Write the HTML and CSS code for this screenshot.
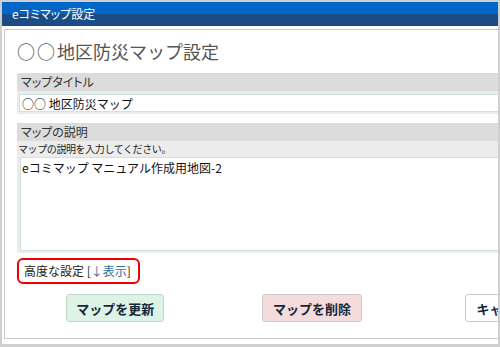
FILE: index.html
```html
<!DOCTYPE html>
<html lang="ja">
<head>
<meta charset="utf-8">
<title>eコミマップ設定</title>
<link rel="stylesheet" href="styles.css">
</head>
<body>
<div class="window">
  <div class="titlebar">eコミマップ設定</div>
  <div class="panel">
    <h1 class="page-title"><span class="circles">○○</span>地区防災マップ設定</h1>
    <div class="section">
      <div class="sec-head">マップタイトル</div>
      <div class="sec-body sec-body-input">
        <input class="text-input" type="text" value="○○ 地区防災マップ">
      </div>
    </div>
    <div class="section section-desc">
      <div class="sec-head">マップの説明</div>
      <div class="sec-body">
        <div class="hint">マップの説明を入力してください。</div>
        <textarea class="text-area">eコミマップ マニュアル作成用地図-2</textarea>
      </div>
    </div>
    <div class="advanced"><span class="advanced-box">高度な設定 [<a class="toggle" href="#">↓表示</a>]</span></div>
    <div class="buttons">
      <button class="btn btn-update" type="button">マップを更新</button>
      <button class="btn btn-delete" type="button">マップを削除</button>
      <button class="btn btn-cancel" type="button">キャンセル</button>
    </div>
  </div>
</div>
</body>
</html>
```

FILE: styles.css
```css
html, body {
  margin: 0;
  padding: 0;
}
body {
  background: #cfcfcf;
  width: 500px;
  height: 347px;
  overflow: hidden;
  font-family: "Noto Sans CJK JP", "Noto Sans", sans-serif;
}
.window {
  margin: 2px 2px 0 2px;
  width: 496px;
  height: 342px;
  background: #fff;
  overflow: hidden;
}
.titlebar {
  height: 24px;
  line-height: 24px;
  padding-left: 10px;
  color: #fff;
  font-size: 12px;
  font-feature-settings: "palt";
  background: linear-gradient(to bottom, #0166c8 0, #0166c8 12px, #1b4c86 12px, #1b4c86 24px);
  white-space: nowrap;
}
.panel {
  margin: 3px 0 0 2px;
  width: 560px;
  height: 310px;
  border: 1px solid #cacaca;
  padding: 0 0 0 12px;
  box-sizing: border-box;
}
.page-title {
  margin: 11px 0 0 0;
  font-size: 18px;
  line-height: 20px;
  font-weight: normal;
  color: #555;
  white-space: nowrap;
}
.circles {
  letter-spacing: 2px;
}
.section {
  margin-top: 12px;
}
.section-desc {
  margin-top: 9px;
}
.sec-head {
  height: 18px;
  line-height: 18px;
  background: #dcdcdc;
  color: #333;
  font-size: 12px;
  font-feature-settings: "palt";
  padding-left: 4px;
}
.sec-body {
  background: #ececec;
  padding: 3px 0 2px 2px;
}
.sec-body-input {
  padding: 3px 0 2px 2px;
}
.text-input {
  display: block;
  box-sizing: border-box;
  width: 520px;
  height: 18px;
  margin: 0;
  padding: 0 0 0 2px;
  border: 1px solid #cfe2e2;
  background: #fff;
  font-family: "Noto Sans CJK JP", sans-serif;
  font-size: 12px;
  color: #111;
  outline: none;
}
.sec-body .hint {
  font-size: 10px;
  line-height: 12px;
  color: #222;
  padding: 0 0 0 1px;
  margin: -1px 0 0 -2px;
  letter-spacing: -0.4px;
}
.text-area {
  display: block;
  box-sizing: border-box;
  width: 520px;
  height: 94px;
  margin: 2px 0 0 1px;
  padding: 2px 1px;
  border: 1px solid #cfe2e2;
  background: #fff;
  font-family: "Noto Sans CJK JP", sans-serif;
  font-size: 12px;
  line-height: 16px;
  color: #111;
  resize: none;
  outline: none;
}
.advanced {
  margin-top: 4px;
  height: 26px;
}
.advanced-box {
  display: inline-block;
  box-sizing: border-box;
  width: 123px;
  height: 26px;
  line-height: 22px;
  border: 2px solid #f00000;
  border-radius: 6px;
  padding-left: 5px;
  font-size: 12px;
  color: #222;
  white-space: nowrap;
}
.toggle {
  color: #2f6f95;
  text-decoration: none;
}
.buttons {
  display: flex;
  margin-top: 11px;
  padding-left: 49px;
}
.btn {
  box-sizing: border-box;
  height: 28px;
  width: 100px;
  border-radius: 3px;
  font-family: "Noto Sans CJK JP", sans-serif;
  font-size: 13px;
  font-weight: bold;
  color: #17283a;
  padding: 0;
  white-space: nowrap;
}
.btn-update {
  background: #dcf3e5;
  border: 1px solid #c4d6ca;
}
.btn-delete {
  background: #f4dcdc;
  border: 1px solid #d6c8c8;
  margin-left: 98px;
  width: 101px;
}
.btn-cancel {
  background: #fff;
  border: 1px solid #c8c8c8;
  margin-left: 103px;
  text-align: left;
  padding-left: 11px;
}
```
